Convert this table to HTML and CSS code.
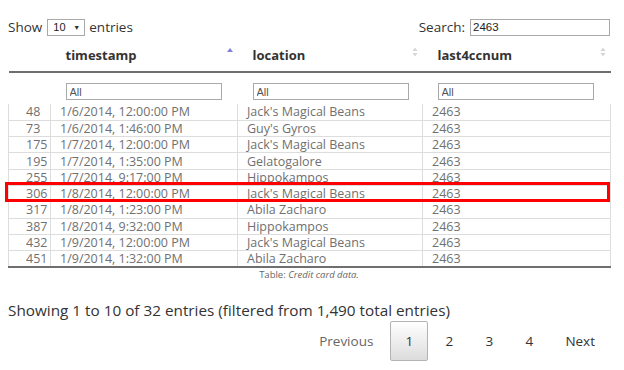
FILE: index.html
```html
<!DOCTYPE html>
<html>
<head>
<meta charset="utf-8">
<link rel="stylesheet" href="styles.css">
</head>
<body>
<div class="wrap">
  <div class="topbar">
    <div class="length">Show <span class="sel"><span>10</span><span class="caret">&#9660;</span></span> entries</div>
    <div class="search">Search: <input class="search-input" type="text" value="2463"></div>
  </div>
  <div class="table-wrap">
    <table class="dt">
      <colgroup>
        <col class="c0"><col class="c1"><col class="c2"><col class="c3">
      </colgroup>
      <thead>
        <tr class="head">
          <th></th>
          <th><span>timestamp</span><svg class="sort" width="8" height="12" viewBox="0 0 8 12"><path d="M1 6 L4 2 L7 6 Z" fill="#7f80d8"/></svg></th>
          <th><span>location</span><svg class="sort" width="8" height="12" viewBox="0 0 8 12"><path d="M1.5 5 L4 1.5 L6.5 5 Z M1.5 7 L4 10.5 L6.5 7 Z" fill="#d6d6d6"/></svg></th>
          <th><span>last4ccnum</span><svg class="sort" width="8" height="12" viewBox="0 0 8 12"><path d="M1.5 5 L4 1.5 L6.5 5 Z M1.5 7 L4 10.5 L6.5 7 Z" fill="#d6d6d6"/></svg></th>
        </tr>
        <tr class="filter">
          <td></td>
          <td><input class="fi" type="text" placeholder="All"></td>
          <td><input class="fi" type="text" placeholder="All"></td>
          <td><input class="fi" type="text" placeholder="All"></td>
        </tr>
      </thead>
      <tbody>
        <tr><td>48</td><td>1/6/2014, 12:00:00 PM</td><td>Jack's Magical Beans</td><td>2463</td></tr>
        <tr><td>73</td><td>1/6/2014, 1:46:00 PM</td><td>Guy's Gyros</td><td>2463</td></tr>
        <tr><td>175</td><td>1/7/2014, 12:00:00 PM</td><td>Jack's Magical Beans</td><td>2463</td></tr>
        <tr><td>195</td><td>1/7/2014, 1:35:00 PM</td><td>Gelatogalore</td><td>2463</td></tr>
        <tr><td>255</td><td>1/7/2014, 9:17:00 PM</td><td>Hippokampos</td><td>2463</td></tr>
        <tr><td>306</td><td>1/8/2014, 12:00:00 PM</td><td>Jack's Magical Beans</td><td>2463</td></tr>
        <tr><td>317</td><td>1/8/2014, 1:23:00 PM</td><td>Abila Zacharo</td><td>2463</td></tr>
        <tr><td>387</td><td>1/8/2014, 9:32:00 PM</td><td>Hippokampos</td><td>2463</td></tr>
        <tr><td>432</td><td>1/9/2014, 12:00:00 PM</td><td>Jack's Magical Beans</td><td>2463</td></tr>
        <tr><td>451</td><td>1/9/2014, 1:32:00 PM</td><td>Abila Zacharo</td><td>2463</td></tr>
      </tbody>
    </table>
    <div class="highlight"></div>
    <div class="caption">Table: <em>Credit card data.</em></div>
  </div>
  <div class="info">Showing 1 to 10 of 32 entries (filtered from 1,490 total entries)</div>
  <div class="paging">
    <span class="pb disabled">Previous</span>
    <span class="pb current">1</span>
    <span class="pb">2</span>
    <span class="pb">3</span>
    <span class="pb">4</span>
    <span class="pb">Next</span>
  </div>
</div>
</body>
</html>
```

FILE: styles.css
```css
html, body {
  margin: 0;
  padding: 0;
  background: #fff;
}
body {
  font-family: "Open Sans", "Noto Sans", sans-serif;
  color: #333;
}
.wrap {
  padding: 8px;
  width: 602px;
}
.topbar {
  display: flex;
  justify-content: space-between;
  align-items: center;
  height: 20px;
  margin-top: 9px;
  font-size: 13.5px;
  color: #333;
}
.length {
  display: flex;
  align-items: center;
  gap: 4px;
}
.sel {
  display: inline-flex;
  align-items: center;
  justify-content: space-between;
  width: 27px;
  height: 15px;
  border: 1px solid #a9a9a9;
  padding: 0 4px 0 5px;
  box-sizing: content-box;
  font-family: "Liberation Sans", Arial, sans-serif;
  font-size: 11px;
  color: #222;
  margin-left: 1px;
}
.sel .caret {
  font-size: 7px;
  color: #333;
}
.search {
  display: flex;
  align-items: center;
  gap: 5px;
}
.search-input {
  width: 134px;
  height: 15px;
  border: 1px solid #a9a9a9;
  padding: 0 2px;
  margin: 0;
  font-family: "Liberation Sans", Arial, sans-serif;
  font-size: 11.5px;
  color: #222;
  outline: none;
}
.table-wrap {
  position: relative;
}
.dt {
  width: 602px;
  border-collapse: collapse;
  table-layout: fixed;
}
.c0 { width: 42px; }
.c1 { width: 187px; }
.c2 { width: 185px; }
.c3 { width: 188px; }
.head th {
  height: 32px;
  padding: 2px 0 0 15px;
  text-align: left;
  font-size: 13px;
  font-weight: 700;
  color: #333;
  border-bottom: 2px solid #6f6f6f;
  position: relative;
}
.head th .sort {
  position: absolute;
  right: 4px;
  top: 9px;
}
.filter td {
  height: 31px;
  padding: 0 0 0 15px;
  vertical-align: top;
}
.fi {
  display: block;
  width: 156px;
  height: 17px;
  box-sizing: border-box;
  margin-top: 10px;
  border: 1px solid #a9a9a9;
  padding: 0 3px;
  font-family: "Liberation Sans", Arial, sans-serif;
  font-size: 11px;
  outline: none;
}
.fi::placeholder {
  color: #555;
}
tbody tr {
  height: 16.3px;
}
tbody td {
  line-height: 15px;
  padding: 0 0 0 9px;
  font-size: 12.5px;
  color: #707070;
  border-top: 1px solid #ddd;
  border-left: 1px solid #ddd;
  border-right: 1px solid #ddd;
  white-space: nowrap;
  overflow: hidden;
}
tbody td:first-child {
  padding-left: 17px;
}
tbody tr:first-child td {
  border-top: none;
}
tbody tr:last-child td {
  border-bottom: 2px solid #6f6f6f;
}
.highlight {
  position: absolute;
  left: -3px;
  top: 145px;
  width: 599px;
  height: 14px;
  border: 3px solid #ff0000;
}
.caption {
  text-align: center;
  font-size: 9.5px;
  color: #666;
  margin-top: 1px;
  line-height: 12px;
}
.info {
  margin-top: 19px;
  font-size: 15.3px;
  color: #333;
  line-height: 20px;
}
.paging {
  display: flex;
  justify-content: flex-end;
  align-items: center;
  margin-top: 1px;
  margin-right: 0;
  font-size: 13.5px;
}
.pb {
  display: inline-block;
  padding: 10px 14px;
  line-height: 18px;
  min-width: 8px;
  text-align: center;
  border: 1px solid transparent;
  border-radius: 2px;
  color: #333;
  margin-left: 2px;
}
.pb.disabled {
  color: #666;
}
.pb.current {
  border: 1px solid #b3b3b3;
  background: linear-gradient(to bottom, #fff 0%, #dcdcdc 100%);
}
```
